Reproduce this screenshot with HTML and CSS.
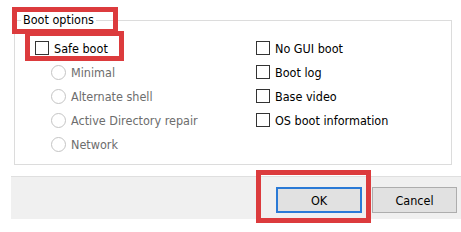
FILE: index.html
```html
<!DOCTYPE html>
<html lang="en">
<head>
    <meta charset="UTF-8">
    <title>Boot options</title>
    <link rel="stylesheet" href="styles.css">
</head>
<body>
    <div class="dialog">
        <fieldset class="group">
            <legend class="group-title marked">Boot options</legend>
            <div class="columns">
                <div class="col">
                    <label class="option marked-row"><span class="check"></span>Safe boot</label>
                    <label class="option sub disabled"><span class="radio"></span>Minimal</label>
                    <label class="option sub disabled"><span class="radio"></span>Alternate shell</label>
                    <label class="option sub disabled"><span class="radio"></span>Active Directory repair</label>
                    <label class="option sub disabled"><span class="radio"></span>Network</label>
                </div>
                <div class="col">
                    <label class="option"><span class="check"></span>No GUI boot</label>
                    <label class="option"><span class="check"></span>Boot log</label>
                    <label class="option"><span class="check"></span>Base video</label>
                    <label class="option"><span class="check"></span>OS boot information</label>
                </div>
            </div>
        </fieldset>

        <div class="footer">
            <button class="btn btn-default marked-btn">OK</button>
            <button class="btn">Cancel</button>
        </div>
    </div>
</body>
</html>
```

FILE: styles.css
```css
body {
    margin: 0;
    background: white;
    font-family: "DejaVu Sans Condensed", "Liberation Sans", sans-serif;
    font-size: 12.5px;
    color: #000;
}

.dialog {
    width: 461px;
    height: 232px;
    overflow: hidden;
}

.group {
    margin: 12px 9px 0 14px;
    padding: 8px 0 8px 20px;
    border: 1px solid #dcdcdc;
}

.group-title {
    margin-left: -14px;
    padding: 0 2px;
    line-height: 16px;
}

.columns {
    display: grid;
    grid-template-columns: 221px 1fr;
}

.col {
    display: flex;
    flex-direction: column;
}

.option {
    display: flex;
    align-items: center;
    height: 24px;
    width: max-content;
}

.option.sub {
    margin-left: 16px;
}

.disabled {
    color: #6d6d6d;
}

.check {
    width: 12px;
    height: 12px;
    border: 1px solid #333;
    background: white;
    margin-right: 5px;
}

.radio {
    width: 13px;
    height: 13px;
    border: 1px solid #c4c4c4;
    border-radius: 50%;
    margin-right: 5px;
}

.footer {
    margin: 11px 0 0 11px;
    padding: 10px 4px 6px 0;
    background: #f0f0f0;
    border-top: 1px solid #dfdfdf;
    display: flex;
    justify-content: flex-end;
    gap: 10px;
}

.btn {
    width: 85px;
    height: 26px;
    font: inherit;
    color: #000;
    background: #e1e1e1;
    border: 1px solid #adadad;
    padding: 0;
}

.btn-default {
    width: 86px;
    border: 2px solid #2b7ad6;
}

/* red highlight frames */
.marked,
.marked-row,
.marked-btn {
    position: relative;
}

.marked::after,
.marked-row::after,
.marked-btn::after {
    content: "";
    position: absolute;
    border: 5px solid #dc3b3d;
    pointer-events: none;
}

.marked::after {
    left: -9px;
    right: -22px;
    top: -5px;
    bottom: -6px;
}

.marked-row::after {
    left: -10px;
    right: -16px;
    top: -5px;
    bottom: -1px;
}

.marked-btn::after {
    left: -22px;
    right: -11px;
    top: -19px;
    bottom: -12px;
}
```
